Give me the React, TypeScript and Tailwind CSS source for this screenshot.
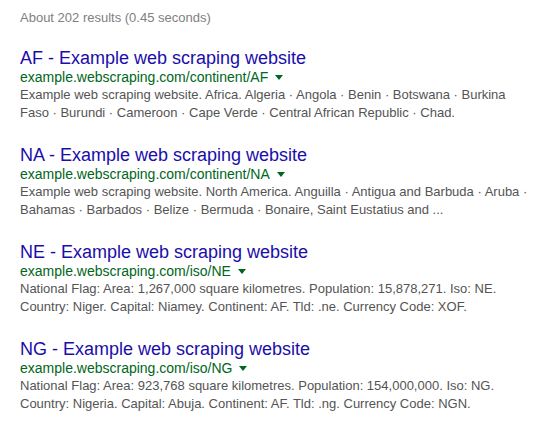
import React from "react";

type R = { title: string; url: string; lines: string[] };

const results: R[] = [
  {
    title: "AF - Example web scraping website",
    url: "example.webscraping.com/continent/AF",
    lines: [
      "Example web scraping website. Africa. Algeria · Angola · Benin · Botswana · Burkina",
      "Faso · Burundi · Cameroon · Cape Verde · Central African Republic · Chad.",
    ],
  },
  {
    title: "NA - Example web scraping website",
    url: "example.webscraping.com/continent/NA",
    lines: [
      "Example web scraping website. North America. Anguilla · Antigua and Barbuda · Aruba ·",
      "Bahamas · Barbados · Belize · Bermuda · Bonaire, Saint Eustatius and ...",
    ],
  },
  {
    title: "NE - Example web scraping website",
    url: "example.webscraping.com/iso/NE",
    lines: [
      "National Flag: Area: 1,267,000 square kilometres. Population: 15,878,271. Iso: NE.",
      "Country: Niger. Capital: Niamey. Continent: AF. Tld: .ne. Currency Code: XOF.",
    ],
  },
  {
    title: "NG - Example web scraping website",
    url: "example.webscraping.com/iso/NG",
    lines: [
      "National Flag: Area: 923,768 square kilometres. Population: 154,000,000. Iso: NG.",
      "Country: Nigeria. Capital: Abuja. Continent: AF. Tld: .ng. Currency Code: NGN.",
    ],
  },
];

export default function App() {
  return (
    <div
      className="w-[541px] h-[425px] bg-white pl-[20px] pt-[8.5px] overflow-hidden"
      style={{ fontFamily: '"Liberation Sans", Arial, sans-serif' }}
    >
      <div className="text-[13px] leading-[18px] text-[#808080]">
        About 202 results (0.45 seconds)
      </div>
      <div className="flex flex-col gap-[23px] mt-[21px]">
        {results.map((r) => (
          <div key={r.title} className="flex flex-col">
            <div className="text-[18px] leading-[21px] text-[#1a0dab] whitespace-nowrap">
              {r.title}
            </div>
            <div className="flex items-center text-[14px] leading-[17px] text-[#006621] whitespace-nowrap">
              <span>{r.url}</span>
              <span className="ml-[7px] mt-[1px] w-0 h-0 border-l-[4px] border-r-[4px] border-t-[5px] border-l-transparent border-r-transparent border-t-[#006621]" />
            </div>
            <div className="text-[13px] leading-[18px] text-[#545454] whitespace-nowrap">
              {r.lines.map((l, i) => (
                <div key={i}>{l}</div>
              ))}
            </div>
          </div>
        ))}
      </div>
    </div>
  );
}
